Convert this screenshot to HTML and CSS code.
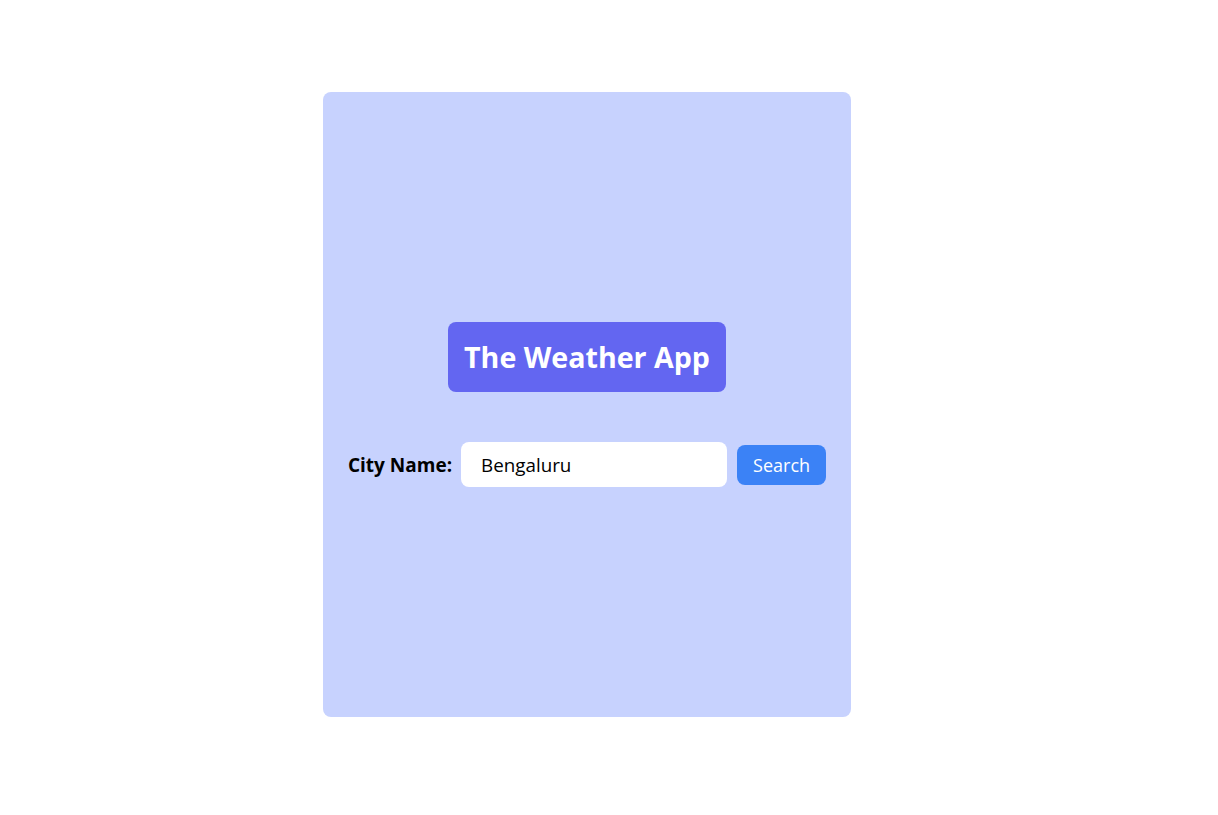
FILE: index.html
```html
<!DOCTYPE html>
<html lang="en">
<head>
<meta charset="utf-8">
<title>The Weather App</title>
<link rel="stylesheet" href="styles.css">
</head>
<body>
<main class="page">
  <section class="card">
    <h1 class="title">The Weather App</h1>
    <form class="search-row">
      <label class="label" for="city">City Name:</label>
      <input class="city-input" id="city" type="text" value="Bengaluru">
      <button class="search-btn" type="button">Search</button>
    </form>
  </section>
</main>
</body>
</html>
```
FILE: styles.css
```css
* { box-sizing: border-box; }
html, body { margin: 0; padding: 0; background: #ffffff; }
body { font-family: "Open Sans", "Noto Sans", sans-serif; color: #000; }
.page { padding: 92px 0 0 323px; }
.card {
  width: 528px;
  height: 625px;
  background: #c7d2fe;
  border-radius: 8px;
  display: flex;
  flex-direction: column;
  align-items: center;
  justify-content: center;
}
.title {
  margin: 0;
  height: 70px;
  padding: 0 16px;
  display: flex;
  align-items: center;
  background: #6366f1;
  color: #fff;
  border-radius: 8px;
  font-size: 28.6px;
  font-weight: 700;
  line-height: 36px;
}
.search-row {
  margin: 50px 0 0;
  display: flex;
  align-items: center;
}
.label {
  font-size: 19px;
  font-weight: 700;
  margin-right: 9px;
}
.city-input {
  width: 266px;
  height: 45px;
  border: none;
  border-radius: 8px;
  background: #fff;
  padding: 0 20px;
  font-family: inherit;
  font-size: 18.8px;
  color: #000;
  outline: none;
}
.search-btn {
  margin-left: 10px;
  width: 89px;
  height: 40px;
  border: none;
  border-radius: 8px;
  background: #3b82f6;
  color: #fff;
  font-family: inherit;
  font-size: 18px;
  padding: 0;
}
```
